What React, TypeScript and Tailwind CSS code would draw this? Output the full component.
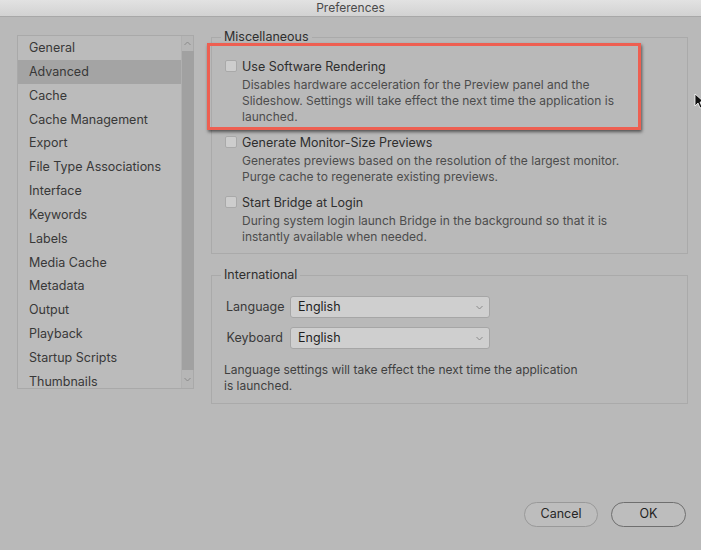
import React from "react";

const items = [
  "General",
  "Advanced",
  "Cache",
  "Cache Management",
  "Export",
  "File Type Associations",
  "Interface",
  "Keywords",
  "Labels",
  "Media Cache",
  "Metadata",
  "Output",
  "Playback",
  "Startup Scripts",
  "Thumbnails",
];

function Check() {
  return <span className="mt-[1px] h-[12px] w-[12px] shrink-0 rounded-[2px] border border-[#a9a9a9] bg-[#cdcdcd]" />;
}

function Option({ label, desc }: { label: string; desc: string[] }) {
  return (
    <div className="flex gap-[5px]">
      <Check />
      <div className="flex flex-col">
        <div className="h-[16px] text-[12.5px] leading-[16px] text-[#2e2e2e]">{label}</div>
        <div className="mt-[2px] leading-[16px] text-[#4c4c4c]">
          {desc.map((d) => (
            <div key={d}>{d}</div>
          ))}
        </div>
      </div>
    </div>
  );
}

function Chevron({ up }: { up?: boolean }) {
  return (
    <svg width="7" height="5" viewBox="0 0 7 5" className="text-[#8a8a8a]">
      <path d={up ? "M0.5 4 L3.5 1 L6.5 4" : "M0.5 1 L3.5 4 L6.5 1"} fill="none" stroke="currentColor" strokeWidth="1" />
    </svg>
  );
}

function Select({ label }: { label: string }) {
  return (
    <div className="flex items-center gap-[7px]">
      <div className="w-[57px] text-right text-[12.5px] text-[#3a3a3a]">{label}</div>
      <div className="flex h-[22px] w-[200px] items-center justify-between rounded-[3px] border border-[#a6a6a6] bg-[#cfcfcf] pl-[7px] pr-[6px] text-[12.5px] text-[#1f1f1f]">
        <span>English</span>
        <Chevron />
      </div>
    </div>
  );
}

export default function App() {
  return (
    <div
      className="relative h-[550px] w-[701px] overflow-hidden bg-[#b9b9b9] text-[12px]"
      style={{ fontFamily: "Inter, 'Noto Sans', sans-serif" }}
    >
      <div className="flex h-[17px] items-center justify-center border-b border-[#a8a8a8] bg-gradient-to-b from-[#e2e2e2] to-[#d2d2d2] text-[12px] text-[#4a4a4a]">
        Preferences
      </div>
      <div className="flex pl-[17px] pt-[11px]">
        <div className="mt-[7px] flex h-[354px] w-[177px] border border-[#a9a9a9] bg-[#bbbbbb]">
          <div className="flex flex-1 flex-col overflow-hidden">
            {items.map((it) => (
              <div
                key={it}
                className={`h-[23.85px] shrink-0 pl-[11px] text-[12.5px] leading-[23.85px] text-[#383838] ${
                  it === "Advanced" ? "bg-[#a4a4a4]" : ""
                }`}
              >
                {it}
              </div>
            ))}
          </div>
          <div className="flex w-[12px] flex-col items-center border-l border-[#b0b0b0] bg-[#b6b6b6]">
            <div className="flex h-[15px] items-center">
              <Chevron up />
            </div>
            <div className="w-[12px] flex-1 bg-[#a1a1a1]" />
            <div className="flex h-[18px] items-center">
              <Chevron />
            </div>
          </div>
        </div>
        <div className="ml-[17px] mt-[1px] flex w-[477px] flex-col">
          <fieldset className="h-[225px] border border-[#aaaaaa] pl-[13px] pr-[10px]">
            <legend className="-ml-[4px] px-[3px] text-[12.5px] leading-[16px] text-[#2e2e2e]">Miscellaneous</legend>
            <div className="mt-[14px] flex flex-col gap-[10px]">
              <Option
                label="Use Software Rendering"
                desc={[
                  "Disables hardware acceleration for the Preview panel and the",
                  "Slideshow. Settings will take effect the next time the application is",
                  "launched.",
                ]}
              />
              <Option
                label="Generate Monitor-Size Previews"
                desc={[
                  "Generates previews based on the resolution of the largest monitor.",
                  "Purge cache to regenerate existing previews.",
                ]}
              />
              <Option
                label="Start Bridge at Login"
                desc={[
                  "During system login launch Bridge in the background so that it is",
                  "instantly available when needed.",
                ]}
              />
            </div>
          </fieldset>
          <fieldset className="mt-[13px] h-[137px] border border-[#aaaaaa] pl-[12px]">
            <legend className="-ml-[3px] px-[3px] text-[12.5px] leading-[16px] text-[#2e2e2e]">International</legend>
            <div className="mt-[13px] flex flex-col gap-[9px] pl-[2px]">
              <Select label="Language" />
              <Select label="Keyboard" />
            </div>
            <div className="mt-[13px] leading-[16px] text-[#3f3f3f]">
              <div>Language settings will take effect the next time the application</div>
              <div>is launched.</div>
            </div>
          </fieldset>
        </div>
      </div>
      <div className="absolute bottom-[23px] right-[15px] flex gap-[13px]">
        <button className="h-[25px] w-[74px] rounded-full border border-[#999999] bg-[#bdbdbd] text-[12.5px] text-[#262626]">
          Cancel
        </button>
        <button className="h-[25px] w-[75px] rounded-full border border-[#6f6f6f] bg-[#bdbdbd] text-[12.5px] text-[#1f1f1f]">
          OK
        </button>
      </div>
      <div className="pointer-events-none absolute left-[207px] top-[43px] h-[87px] w-[434px] border-[3px] border-[#ee5f51] shadow-[1px_2px_3px_rgba(0,0,0,0.55)]" />
      <svg className="absolute left-[694px] top-[93px]" width="10" height="16" viewBox="0 0 10 16">
        <path d="M1 1 L1 13 L4 10 L6 15 L8 14 L6 9 L10 9 Z" fill="#111" stroke="#fff" strokeWidth="0.8" />
      </svg>
    </div>
  );
}
